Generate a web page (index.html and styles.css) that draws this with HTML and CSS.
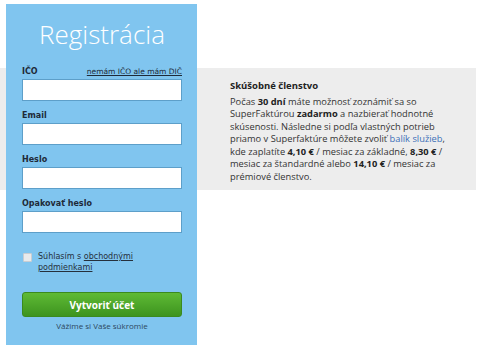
FILE: index.html
```html
<!DOCTYPE html>
<html lang="sk">
<head>
<meta charset="utf-8">
<title>Registrácia</title>
<link rel="stylesheet" href="styles.css">
</head>
<body>
<div class="page">
  <div class="band">
    <div class="info">
      <h2 class="info-title">Skúšobné členstvo</h2>
      <p class="info-text">Počas <b>30 dní</b> máte možnosť zoznámiť sa so SuperFaktúrou <b>zadarmo</b> a nazbierať hodnotné skúsenosti. Následne si podľa vlastných potrieb priamo v Superfaktúre môžete zvoliť <a class="blue" href="#">balík služieb</a>, kde zaplatíte <b>4,10 €</b> / mesiac za základné, <b>8,30 €</b> / mesiac za štandardné alebo <b>14,10 €</b> / mesiac za prémiové členstvo.</p>
    </div>
  </div>
  <form class="panel">
    <h1 class="title">Registrácia</h1>
    <div class="field">
      <div class="label-row"><label class="label">IČO</label><a class="alt" href="#">nemám IČO ale mám DIČ</a></div>
      <input class="input" type="text">
    </div>
    <div class="field">
      <div class="label-row"><label class="label">Email</label></div>
      <input class="input" type="text">
    </div>
    <div class="field">
      <div class="label-row"><label class="label">Heslo</label></div>
      <input class="input" type="password">
    </div>
    <div class="field">
      <div class="label-row"><label class="label">Opakovať heslo</label></div>
      <input class="input" type="password">
    </div>
    <div class="agree">
      <span class="check"></span>
      <span class="agree-text">Súhlasím s <a href="#" class="dark">obchodnými podmienkami</a></span>
    </div>
    <button class="btn" type="button">Vytvoriť účet</button>
    <div class="privacy">Vážime si Vaše súkromie</div>
  </form>
</div>
</body>
</html>
```
FILE: styles.css
```css
html, body { margin: 0; padding: 0; background: #fff; }
.page {
  width: 484px;
  height: 351px;
  display: grid;
  grid-template-columns: 6px 191px 1fr 8px;
  grid-template-rows: 4px 64px 122px 1fr 6px;
  overflow: hidden;
}
.band {
  grid-column: 1 / 4;
  grid-row: 3;
  background: #ededed;
  padding: 12px 0 0 230px;
  box-sizing: border-box;
}
.info { width: 228px; font-family: "Open Sans", sans-serif; color: #333; font-size: 9.3px; line-height: 12.5px; }
.info-title { margin: 0 0 3px; font-size: 9.5px; font-weight: 700; color: #222; }
.info-text { margin: 0; }
.info-text b { font-weight: 700; color: #222; }
.blue { color: #3c70b8; text-decoration: none; }

.panel {
  grid-column: 2;
  grid-row: 2 / 5;
  z-index: 1;
  margin: 0;
  background: #80c5ef;
  padding: 0 15px 0 16px;
  display: flex;
  flex-direction: column;
}
.title {
  margin: 12px 0 13px;
  text-align: center;
  font-family: "Open Sans", sans-serif;
  font-weight: 300;
  font-size: 26px;
  line-height: 36px;
  color: #fff;
}
.field { display: flex; flex-direction: column; margin-bottom: 8px; }
.label-row { display: flex; justify-content: space-between; align-items: flex-end; height: 11px; margin-bottom: 3px; }
.label { font-family: "DejaVu Sans", sans-serif; font-weight: 700; font-size: 8px; color: #1e2a38; }
.alt { font-family: "DejaVu Sans", sans-serif; font-size: 7.5px; color: #1e2a38; text-decoration: underline; }
.input {
  height: 22px;
  box-sizing: border-box;
  border: 1px solid #5d9fc9;
  background: #fff;
  margin: 0;
  padding: 0;
  width: 100%;
}
.agree { display: flex; align-items: flex-start; margin-top: 10px; }
.check {
  flex: none;
  width: 7px; height: 7px;
  margin: 2px 6px 0 1px;
  border: 1px solid #c9cdd2;
  border-radius: 1px;
  background: #e8eaec;
}
.agree-text { font-family: "DejaVu Sans", sans-serif; font-size: 8px; line-height: 11px; color: #25303c; }
.dark { color: #25303c; text-decoration: underline; }
.btn {
  margin-top: 19px;
  height: 25px;
  border: 1px solid #3b8a1e;
  border-radius: 3px;
  background: linear-gradient(#5fba35, #3d941f);
  color: #fff;
  font-family: "Open Sans", sans-serif;
  font-weight: 700;
  font-size: 10px;
  padding: 0;
}
.privacy {
  margin-top: 3px;
  text-align: center;
  font-family: "Open Sans", sans-serif;
  font-size: 8px;
  color: #2d4760;
}
```
